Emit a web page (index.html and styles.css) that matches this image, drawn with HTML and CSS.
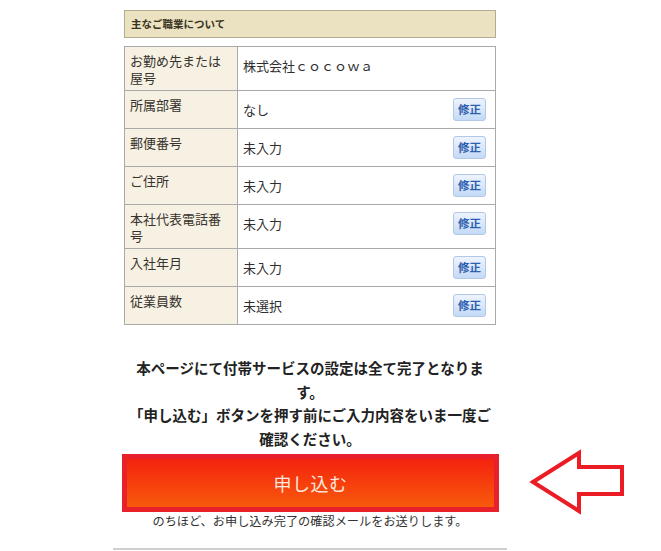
FILE: index.html
```html
<!DOCTYPE html>
<html lang="ja">
<head>
<meta charset="utf-8">
<title>主なご職業について</title>
<link rel="stylesheet" href="styles.css">
</head>
<body>
<div class="page">
  <div class="section-head">主なご職業について</div>
  <table class="info">
    <tr>
      <th>お勤め先または屋号</th>
      <td><div class="val"><span>株式会社ｃｏｃｏｗａ</span></div></td>
    </tr>
    <tr>
      <th>所属部署</th>
      <td><div class="val"><span>なし</span><button class="edit">修正</button></div></td>
    </tr>
    <tr>
      <th>郵便番号</th>
      <td><div class="val"><span>未入力</span><button class="edit">修正</button></div></td>
    </tr>
    <tr>
      <th>ご住所</th>
      <td><div class="val"><span>未入力</span><button class="edit">修正</button></div></td>
    </tr>
    <tr>
      <th>本社代表電話番号</th>
      <td><div class="val"><span>未入力</span><button class="edit">修正</button></div></td>
    </tr>
    <tr>
      <th>入社年月</th>
      <td><div class="val"><span>未入力</span><button class="edit">修正</button></div></td>
    </tr>
    <tr>
      <th>従業員数</th>
      <td><div class="val"><span>未選択</span><button class="edit">修正</button></div></td>
    </tr>
  </table>

  <p class="message">本ページにて付帯サービスの設定は全て完了となります。<br>「申し込む」ボタンを押す前にご入力内容をいま一度ご確認ください。</p>

  <div class="apply-frame">
    <button class="apply-btn">申し込む</button>
  </div>
  <p class="note">のちほど、お申し込み完了の確認メールをお送りします。</p>
  <div class="footer-line"></div>
</div>

<svg class="arrow" width="100" height="68" viewBox="0 0 100 68" aria-hidden="true">
  <polygon points="5,34 51,5 51,19 94,19 94,46 51,46 51,63" fill="none" stroke="#ec1c24" stroke-width="4" stroke-linejoin="miter"/>
</svg>
</body>
</html>
```

FILE: styles.css
```css
html, body {
  margin: 0;
  padding: 0;
  background: #ffffff;
}

body {
  font-family: "Noto Sans CJK JP", "Noto Sans", sans-serif;
  color: #333333;
  position: relative;
  width: 661px;
  height: 551px;
  overflow: hidden;
}

.page {
  width: 372px;
  margin-left: 124px;
  padding-top: 10px;
}

.section-head {
  height: 26px;
  line-height: 26px;
  border: 1px solid #b4ab93;
  background: #ebe2c1;
  font-size: 10.5px;
  font-weight: bold;
  color: #3a3222;
  padding-left: 6px;
}

.info {
  width: 372px;
  margin-top: 8px;
  border-collapse: collapse;
  table-layout: fixed;
}

.info th,
.info td {
  border: 1px solid #a9a9a9;
  vertical-align: top;
  text-align: left;
  font-size: 13px;
  line-height: 17px;
}

.info th {
  width: 103px;
  background: #f7f1e3;
  font-weight: normal;
  color: #36332e;
  padding: 5px 4px 4px 5px;
}

.info td {
  background: #ffffff;
  color: #2e2e2e;
  padding: 7px 9px 7px 5px;
}

.val {
  display: flex;
  align-items: center;
  justify-content: space-between;
  min-height: 23px;
}

.edit {
  width: 33px;
  height: 23px;
  padding: 0;
  border: 1px solid #b3c8e6;
  border-radius: 3px;
  background: linear-gradient(#eef4fd, #c4daf6);
  color: #2e5fae;
  font-family: "Noto Sans CJK JP", sans-serif;
  font-size: 11.5px;
  font-weight: bold;
  line-height: 21px;
}

.message {
  margin: 31px 0 0;
  text-align: center;
  font-size: 14.5px;
  line-height: 23.5px;
  font-weight: bold;
  color: #222222;
}

.apply-frame {
  margin: 4px -3px 0 -2px;
  border: 5px solid #e8202a;
}

.apply-btn {
  display: block;
  width: 100%;
  height: 48px;
  border: 0;
  padding: 0;
  background: linear-gradient(#f4230f, #f85a0b);
  color: #fde8de;
  font-family: "Noto Sans CJK JP", sans-serif;
  font-size: 18px;
  letter-spacing: 0.5px;
}

.note {
  margin: 1px 0 0;
  text-align: center;
  font-size: 12.2px;
  line-height: 16px;
  color: #333333;
}

.footer-line {
  margin: 19px -11px 0 -11px;
  border-top: 2px solid #cfcfcf;
}

.arrow {
  position: absolute;
  left: 528px;
  top: 448px;
}
```
